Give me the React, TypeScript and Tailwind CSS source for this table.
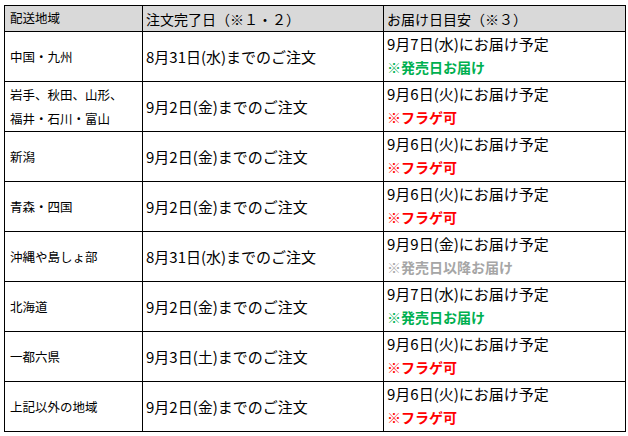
import React from 'react';

type Note = { text: string; color: 'green' | 'red' | 'gray' };

interface Row {
  area: React.ReactNode;
  deadline: string;
  delivery: string;
  note: Note;
}

const FLAG: Note = { text: '※フラゲ可', color: 'red' };
const RELEASE: Note = { text: '※発売日お届け', color: 'green' };

const rows: Row[] = [
  { area: '中国・九州', deadline: '8月31日(水)までのご注文', delivery: '9月7日(水)にお届け予定', note: RELEASE },
  {
    area: (
      <>
        岩手、秋田、山形、
        <br />
        福井・石川・富山
      </>
    ),
    deadline: '9月2日(金)までのご注文',
    delivery: '9月6日(火)にお届け予定',
    note: FLAG,
  },
  { area: '新潟', deadline: '9月2日(金)までのご注文', delivery: '9月6日(火)にお届け予定', note: FLAG },
  { area: '青森・四国', deadline: '9月2日(金)までのご注文', delivery: '9月6日(火)にお届け予定', note: FLAG },
  { area: '沖縄や島しょ部', deadline: '8月31日(水)までのご注文', delivery: '9月9日(金)にお届け予定', note: { text: '※発売日以降お届け', color: 'gray' } },
  { area: '北海道', deadline: '9月2日(金)までのご注文', delivery: '9月7日(水)にお届け予定', note: RELEASE },
  { area: '一都六県', deadline: '9月3日(土)までのご注文', delivery: '9月6日(火)にお届け予定', note: FLAG },
  { area: '上記以外の地域', deadline: '9月2日(金)までのご注文', delivery: '9月6日(火)にお届け予定', note: FLAG },
];

const noteColor = {
  green: 'text-[#00b050]',
  red: 'text-[#ff0000]',
  gray: 'text-[#a6a6a6]',
};

export default function App() {
  return (
    <div
      className="w-[628px] h-[436px] bg-white pt-[5px] pl-[4px] text-black"
      style={{ fontFamily: '"Noto Sans CJK JP", "Noto Sans", sans-serif' }}
    >
      <table className="w-[621px] border-collapse table-fixed">
        <colgroup>
          <col className="w-[138px]" />
          <col className="w-[241px]" />
          <col className="w-[242px]" />
        </colgroup>
        <thead>
          <tr className="h-[26px] bg-[#d9d9d9]">
            <th className="border border-black px-[5px] text-left font-normal text-[12.5px] leading-none">配送地域</th>
            <th className="border border-black px-[3px] text-left font-normal text-[14px] leading-none">注文完了日（※１・２）</th>
            <th className="border border-black px-[3px] text-left font-normal text-[14px] leading-none">お届け日目安（※３）</th>
          </tr>
        </thead>
        <tbody>
          {rows.map((r, i) => (
            <tr key={i} className="h-[50px]">
              <td className="border border-black px-[5px] text-[12.5px] leading-[24px] align-middle">{r.area}</td>
              <td className="border border-black px-[3px] text-[15px] leading-none align-middle">{r.deadline}</td>
              <td className="border border-black px-[3px] align-middle">
                <div className="text-[15px] leading-[20px]">{r.delivery}</div>
                <div className={`text-[14px] leading-[26px] font-bold ${noteColor[r.note.color]}`}>{r.note.text}</div>
              </td>
            </tr>
          ))}
        </tbody>
      </table>
    </div>
  );
}
